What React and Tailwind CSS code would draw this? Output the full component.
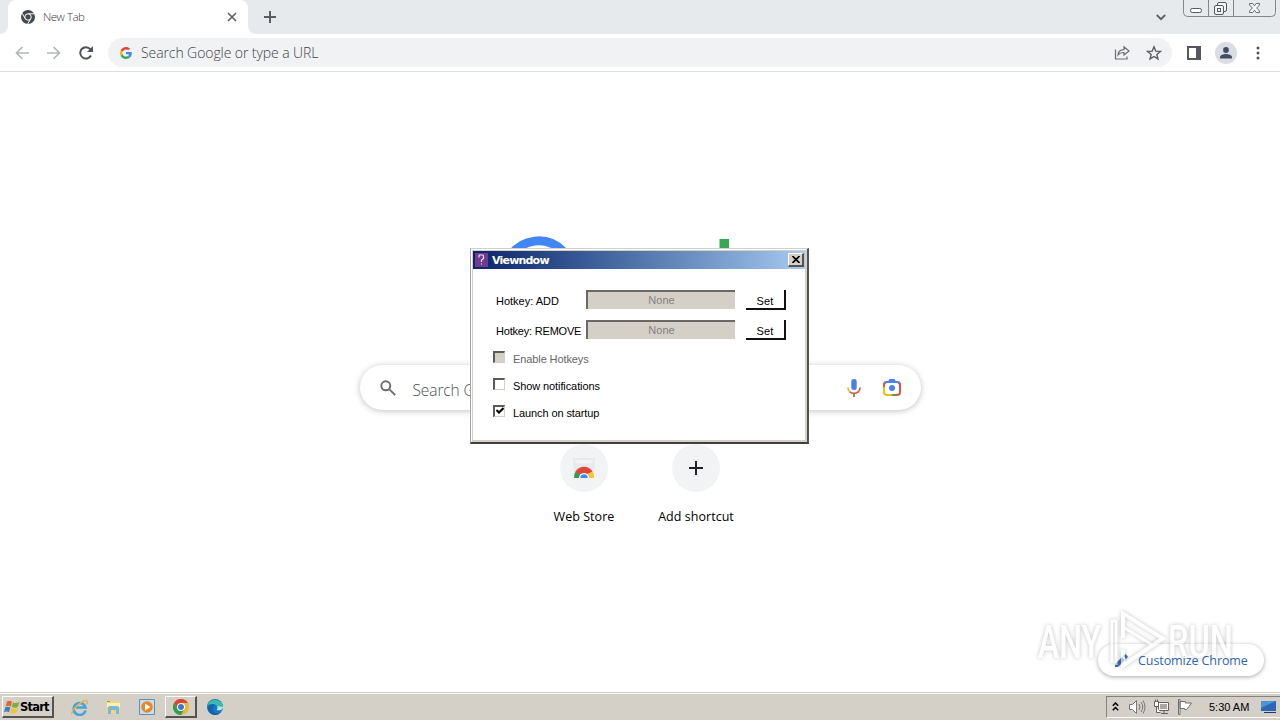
import React from "react";
import clsx from "clsx";

const TabStrip = () => (
  <div className="flex h-[34px] bg-[#e7eaed]">
    <div className="flex h-full w-2 items-end bg-white">
      <div className="h-full w-2 rounded-br-lg bg-[#e7eaed]" />
    </div>
    <div className="flex h-full w-60 items-center rounded-t-lg bg-white pl-[13px] pr-[11px]">
      <svg width="14" height="14" viewBox="0 0 14 14">
        <circle cx="7" cy="7" r="7" fill="#45484c" />
        <g stroke="#fff" strokeWidth="1" fill="none">
          <path d="M7 3.800h6.400M4.200 8.600 1 3.200M9.800 8.600 6.600 14" />
          <circle cx="7" cy="7" r="3.200" fill="#45484c" />
        </g>
      </svg>
      <span className="ml-2 flex-1 text-[11.5px] leading-4 font-light tracking-[-0.500px] text-[#3c4043]">New Tab</span>
      <svg width="10" height="10" viewBox="0 0 10 10" stroke="#5f6368" strokeWidth="1.700">
        <path d="M1 1l8 8M9 1l-8 8" />
      </svg>
    </div>
    <div className="flex w-2 items-end bg-white">
      <div className="h-full w-2 rounded-bl-lg bg-[#e7eaed]" />
    </div>
    <svg className="mt-[11px] ml-2" width="12" height="12" viewBox="0 0 12 12" stroke="#5a5e63" strokeWidth="2">
      <path d="M6 0v12M0 6h12" />
    </svg>
    <svg className="mt-[14px] ml-auto" width="10" height="7" viewBox="0 0 10 7" fill="none" stroke="#5f6368" strokeWidth="1.900">
      <path d="M.8 1 5 5.200 9.200 1" />
    </svg>
    <svg className="ml-[17px] shrink-0" width="97" height="18" viewBox="0 0 97 18" fill="none" stroke="#83878c">
      <path d="M.5 0v12.500q0 4 4 4h84q4 0 4-4V0M25.500 0v16M50.500 0v16" />
      <rect x="7.500" y="8.500" width="11" height="4" rx="1.800" fill="#fff" stroke="#55595e" />
      <g stroke="#55595e" fill="#f4f5f6">
        <rect x="34.500" y="2.500" width="9" height="9" rx="1.500" />
        <rect x="31.500" y="5.500" width="9" height="9" rx="1.500" />
        <rect x="34.500" y="8.500" width="3" height="3" />
      </g>
      <path d="M66.500 3.500h3.300l1.700 2.300 1.700-2.300h3.300v1.500L73.700 8l2.800 3v1.500h-3.300l-1.700-2.300-1.700 2.300h-3.300V11l2.800-3-2.800-3z" fill="#f4f5f6" stroke="#6a6e73" />
    </svg>
  </div>
);

const GoogleG = () => (
  <svg width="12" height="12" viewBox="0 0 48 48">
    <path fill="#EA4335" d="M24 9.500c3.540 0 6.710 1.220 9.210 3.600l6.850-6.850C35.900 2.380 30.470 0 24 0 14.620 0 6.510 5.380 2.560 13.220l7.980 6.190C12.430 13.720 17.740 9.500 24 9.500z" />
    <path fill="#4285F4" d="M46.980 24.550c0-1.570-.15-3.090-.38-4.550H24v9.020h12.940c-.58 2.960-2.260 5.480-4.780 7.180l7.730 6c4.510-4.180 7.090-10.360 7.090-17.650z" />
    <path fill="#FBBC05" d="M10.530 28.590c-.48-1.450-.76-2.990-.76-4.590s.27-3.140.76-4.590l-7.980-6.190C.92 16.460 0 20.120 0 24c0 3.880.92 7.540 2.560 10.780l7.970-6.190z" />
    <path fill="#34A853" d="M24 48c6.480 0 11.930-2.130 15.890-5.810l-7.730-6c-2.150 1.450-4.920 2.300-8.160 2.300-6.260 0-11.570-4.220-13.470-9.910l-7.980 6.190C6.510 42.620 14.620 48 24 48z" />
  </svg>
);

const Toolbar = () => (
  <div className="flex h-[38px] items-center border-b border-[#dcdde0] bg-white pl-[15px]">
    <svg width="14" height="14" viewBox="0 0 14 14" fill="none" stroke="#b4b7ba" strokeWidth="1.700">
      <path d="M14 7H1.500M7.500 1l-6 6 6 6" />
    </svg>
    <svg className="ml-[18px]" width="14" height="14" viewBox="0 0 14 14" fill="none" stroke="#b4b7ba" strokeWidth="1.700">
      <path d="M0 7h12.500M6.500 1l6 6-6 6" />
    </svg>
    <svg className="ml-[18px]" width="14" height="14" viewBox="0 0 14 14" fill="none">
      <path d="M12 9.500A5.700 5.700 0 1 1 11.300 3.200L13 5" stroke="#505458" strokeWidth="2" />
      <path d="M14 0v6H8z" fill="#505458" />
    </svg>
    <div className="ml-[15px] flex h-[29px] w-[1064px] items-center rounded-full bg-[#f0f2f4] pr-[10px] pl-3">
      <GoogleG />
      <span className="ml-[9px] flex-1 text-[14px] leading-5 font-light tracking-[-0.090px] text-[#3f4347]">
        Search Google or type a URL
      </span>
      <svg width="16" height="15" viewBox="0 0 16 15" fill="none" stroke="#6b6f74" strokeWidth="1.200">
        <path d="M1.500 4.500v9.500h11.500V11.500" />
        <path d="M4 10c.3-3.600 2.500-5.200 6-5.300V1.800L15 6l-5 4V7.500C7.500 7.500 5.500 8 4 10z" />
      </svg>
      <svg className="ml-4" width="16" height="16" viewBox="0 0 16 16" fill="none" stroke="#5a5e63" strokeWidth="1.400">
        <path d="M8 1.800l1.750 4.300 4.650.35-3.550 3 1.100 4.500L8 11.500l-3.950 2.450 1.100-4.500-3.550-3 4.650-.35z" />
      </svg>
    </div>
    <svg className="ml-[15px]" width="14" height="14" viewBox="0 0 14 14">
      <rect x="1" y="1" width="12" height="12" fill="#fff" stroke="#55585d" strokeWidth="2" />
      <path d="M9 1h4v12H9z" fill="#55585d" />
    </svg>
    <svg className="ml-[14px]" width="22" height="22" viewBox="0 0 22 22">
      <circle cx="11" cy="11" r="11" fill="#dadde1" />
      <circle cx="11" cy="8" r="2.900" fill="#414c68" />
      <path d="M5 16.500v-1.200c0-2.200 3.500-3.300 6-3.300s6 1.100 6 3.300v1.200z" fill="#414c68" />
    </svg>
    <svg className="ml-[19px]" width="4" height="14" viewBox="0 0 4 14" fill="#505458">
      <circle cx="2" cy="2" r="1.500" />
      <circle cx="2" cy="7" r="1.500" />
      <circle cx="2" cy="12" r="1.500" />
    </svg>
  </div>
);

const SearchBox = () => (
  <div className="mt-[41px] flex h-[45px] w-[561px] items-center rounded-full bg-white pr-5 pl-5 shadow-[0_1px_6px_rgba(32,33,36,0.28)]">
    <svg width="16" height="16" viewBox="0 0 16 16" fill="none" stroke="#6a6d71" strokeWidth="1.900">
      <circle cx="5.800" cy="5.800" r="4.500" />
      <path d="M9.200 9.200l6 6" />
    </svg>
    <span className="ml-[17px] flex-1 pt-1 text-[15.5px] leading-5 font-light tracking-[-0.1px] text-[#4c5054]">Search Google or type a URL</span>
    <svg width="14" height="18" viewBox="0 0 14 18" fill="none">
      <rect x="4.300" y="0" width="5.400" height="11" rx="2.500" fill="#4a80ee" />
      <path d="M1 8.500c0 2 .6 3.400 1.800 4.400" stroke="#f0b51c" strokeWidth="1.700" />
      <path d="M2.800 12.900C5 14.800 9 14.800 11.200 12.900 12.400 11.900 13 10.500 13 8.500" stroke="#df5144" strokeWidth="1.700" />
      <path d="M7 14v4" stroke="#5b9c50" strokeWidth="1.800" />
    </svg>
    <svg className="ml-[22px]" width="18" height="17" viewBox="0 0 18 17" fill="none" strokeWidth="2">
      <path d="M1 8V6q0-3 3-3h10q3 0 3 3v2" stroke="#4a80ee" />
      <path d="M5 2.500L6.500 0h5L13 2.500z" fill="#4a80ee" />
      <path d="M15.500 3.300Q17 4 17 6v4" stroke="#df5144" />
      <path d="M1 8V6q0-2 1.200-2.700" stroke="#df5144" />
      <path d="M1 8v5q0 3 3 3h5" stroke="#f2b824" />
      <path d="M9 16h4" stroke="#4fa45a" />
      <path d="M12.500 16H14q3 0 3-3v-3" stroke="#d9583c" />
      <circle cx="9" cy="9" r="3" fill="#4a80ee" />
    </svg>
  </div>
);

const Shortcut = ({ label, children }) => (
  <div className="flex w-28 flex-col items-center">
    <div className="flex size-12 items-center justify-center rounded-full bg-[#f1f3f4]">{children}</div>
    <span className="mt-[15px] text-[12.500px] leading-5 tracking-[0.040px] text-black">{label}</span>
  </div>
);

const NewTabPage = () => (
  <div className="relative flex h-[620px] flex-col items-center bg-white pt-[162px]">
    {/* Logo */}
    <svg width="272" height="90" viewBox="504 234 272 90" fill="none">
      <path d="M562.500 251A33.500 33.500 0 1 0 572 275" stroke="#4285f4" strokeWidth="9" />
      <path d="M719.500 239h9.500v60h-9.500z" fill="#34a853" />
    </svg>
    <SearchBox />
    <div className="mt-[34px] flex">
      <Shortcut label="Web Store">
        <svg width="24" height="24" viewBox="0 0 24 24">
          <path d="M1 2h22l-1 17H2z" fill="#e8e9ea" />
          <path d="M3 4h18v1.500q-2 2-4 2H7q-2 0-4-2z" fill="#f4f4f5" />
          <path d="M2 22a10 10 0 0 1 2-7l5 4v3z" fill="#349b53" />
          <path d="M3.500 15.500a10 10 0 0 1 17 0L17 18H7z" fill="#df4638" />
          <path d="M20.500 15.500A10 10 0 0 1 22 22h-7v-4z" fill="#f7c633" />
          <path d="M7 22a5 5 0 0 1 10 0z" fill="#fff" />
          <path d="M8.300 22a3.700 3.700 0 0 1 7.400 0z" fill="#4285f4" />
        </svg>
      </Shortcut>
      <Shortcut label="Add shortcut">
        <svg width="14" height="14" viewBox="0 0 14 14" stroke="#202124" strokeWidth="2">
          <path d="M7 0v14M0 7h14" />
        </svg>
      </Shortcut>
    </div>
    <div className="absolute right-4 bottom-4 flex h-8 w-[166px] items-center rounded-full bg-white pl-[17px] shadow-[0_1px_4px_rgba(0,0,0,0.35)]">
      <svg width="13" height="13" viewBox="0 0 13 13">
        <path d="M0 13v-3l7-7 3 3-7 7zM8 2l1.500-1.500Q10.200 0 11 .500L12.500 2q.5.700 0 1.500L11 5z" fill="#3f6fb9" />
      </svg>
      <span className="ml-[10px] pt-0.5 text-[12.500px] leading-5 tracking-[-0.080px] text-[#2d65ba]">Customize Chrome</span>
    </div>
  </div>
);

const Watermark = () => (
  <svg
    className="absolute top-[604px] left-[1030px] drop-shadow-[0_0_2px_rgba(0,0,0,0.4)]"
    width="220"
    height="84"
    viewBox="0 0 220 84"
    fill="#fff"
    opacity="0.6"
  >
    <text x="8" y="54" fontFamily="Roboto" fontSize="47" fontWeight="500" textLength="63" lengthAdjust="spacingAndGlyphs">ANY</text>
    <text x="138" y="54" fontFamily="Roboto" fontSize="47" fontWeight="500" textLength="65" lengthAdjust="spacingAndGlyphs">RUN</text>
    <g fill="none" stroke="#fff" strokeWidth="4">
      <path d="M93 34V9.500l40 25-40 27V46" />
      <path d="M82 59V17h4v44M93 23l31 19" strokeWidth="3" />
    </g>
  </svg>
);

const HotkeyRow = ({ label, spacing }) => (
  <div className="flex h-5 items-center">
    <span className={clsx("w-[90px] pt-0.5 text-[11px] leading-4 whitespace-nowrap", spacing)}>{label}</span>
    <div className="mb-px h-[19px] w-[149px] border-t-2 border-l-2 border-t-[#6b6965] border-l-[#6b6965] bg-[#d4d0c8] text-center text-[11px] leading-[17px] tracking-[0.100px] text-[#85827e]">
      None
    </div>
    <button className="ml-[11px] h-5 w-10 border-r-2 border-b-2 border-[#111] bg-white pt-[3px] text-center text-[11px] leading-4 tracking-[0.100px]">
      Set
    </button>
  </div>
);

const Check = ({ label, checked, disabled }) => (
  <label className="flex h-[27px] items-center">
    <span
      className={clsx(
        "flex size-3 items-center justify-center border-t-2 border-l-2 border-r border-b border-t-[#5d5b58] border-l-[#5d5b58] border-r-[#d4d0c8] border-b-[#d4d0c8]",
        disabled ? "bg-[#d4d0c8]" : "bg-white"
      )}
    >
      {checked && (
        <svg width="8" height="8" viewBox="0 0 8 8" fill="none" stroke="#000" strokeWidth="2">
          <path d="M.5 3l2.500 2.500L7.500 1" />
        </svg>
      )}
    </span>
    <span className={clsx("ml-2 pt-1 text-[11px] leading-4 tracking-[-0.1px]", disabled ? "text-[#666]" : "text-black")}>{label}</span>
  </label>
);

const ViewndowDialog = () => (
  <div className="absolute top-[248px] left-[470px] h-[196px] w-[339px] border border-t-[#d4d0c8] border-r-2 border-b-2 border-l-[#aaa7a2] border-r-[#55534f] border-b-[#404040] bg-white font-['Liberation_Sans',sans-serif] text-black">
    <div className="h-full border-l border-r border-l-white border-r-[#d4d0c8] border-t border-b border-t-white border-b-[#d4d0c8]">
      <div className="h-full border border-[#d4d0c8]">
        <div className="flex h-[18px] items-center bg-linear-to-r from-[#0a246a] to-[#a6caf0] pr-px pl-0.5">
          <svg width="13" height="14" viewBox="0 0 13 14">
            <path d="M0 0h13v14H0z" fill="#713b91" />
            <path d="M4 4.500V3q0-1 1-1h2.500q1 0 1 1v2.500L6.500 7v2" fill="none" stroke="#eadcf0" strokeWidth="1.200" />
            <path d="M6 10h1v2H6z" fill="#bb9bc9" />
          </svg>
          <span className="ml-1 flex-1 pt-px font-['DejaVu_Sans',sans-serif] text-[11px] leading-4 font-bold tracking-[-0.800px] text-white">
            Viewndow
          </span>
          <button className="flex h-[14px] w-4 items-center justify-center border-t border-r-2 border-b-2 border-l border-t-white border-r-[#55534f] border-b-[#55534f] border-l-white bg-[#d4d0c8]">
            <svg width="8" height="7" viewBox="0 0 8 7" stroke="#000" strokeWidth="1.600">
              <path d="M.5 0l7 7M7.500 0l-7 7" />
            </svg>
          </button>
        </div>
        <div className="flex flex-col pt-[21px] pl-[23px]">
          <HotkeyRow label="Hotkey: ADD" spacing="tracking-[0px]" />
          <div className="h-[10px]" />
          <HotkeyRow label="Hotkey: REMOVE" spacing="tracking-[-0.2px]" />
          <div className="mt-[3px] -ml-[3px]">
            <Check label="Enable Hotkeys" disabled />
            <Check label="Show notifications" />
            <Check label="Launch on startup" checked />
          </div>
        </div>
      </div>
    </div>
  </div>
);

const ChromeLogo = () => (
  <svg width="16" height="16" viewBox="0 0 16 16">
    <circle cx="8" cy="8" r="8" fill="#e9b934" />
    <path d="M8 4h7A8 8 0 0 0 1 4l3.500 6z" fill="#db4437" />
    <path d="M1 4a8 8 0 0 0 7 12l3.500-6H4.500z" fill="#2f9e55" />
    <circle cx="8" cy="8" r="4" fill="#fff" />
    <circle cx="8" cy="8" r="3" fill="#4277cf" />
  </svg>
);

const Taskbar = () => (
  <div className="flex h-7 items-start border-t border-[#d4d0c8] bg-[#d4d0c8] font-['Liberation_Sans',sans-serif]">
    <div className="flex h-full w-full items-center border-t border-white">
      <button className="ml-0.5 flex h-[22px] w-[52px] items-center border-t border-r-2 border-b-2 border-l border-t-white border-r-[#55534f] border-b-[#55534f] border-l-white pl-px">
        <svg width="16" height="16" viewBox="0 0 16 16">
          <path d="M3 2.500Q6 1 8 2.800L6.700 7.500Q4.500 6 1.600 7.200z" fill="#df682e" />
          <path d="M9 3.200Q11.500 5 15.500 3L14 7.800Q11 9.500 7.700 7.800z" fill="#7aaf3f" />
          <path d="M1.300 8.200Q4 7 6.400 8.500L5 13.300Q3 11.800 0 13z" fill="#3c7fc6" />
          <path d="M7.400 8.900Q10.500 10.500 13.700 9L12.300 13.600Q9 15.500 6 13.700z" fill="#f3c333" />
        </svg>
        <span className="font-['DejaVu_Sans',sans-serif] text-[11.500px] leading-4 font-bold tracking-[-0.800px] text-black">Start</span>
      </button>
      {/* Quick launch */}
      <svg className="ml-[17px]" width="17" height="17" viewBox="0 0 17 17" fill="none">
        <path d="M14.500 11.500A6 6 0 1 1 14.500 8.500H5" stroke="#45a2dc" strokeWidth="2.600" />
        <path d="M1 15C0 12 8 3 15 1.500q2 .5.500 4" stroke="#e1b645" strokeWidth="1.500" />
      </svg>
      <svg className="ml-[17px]" width="17" height="16" viewBox="0 0 17 16">
        <path d="M1 3l1-2h4l1 1h8v12H1z" fill="#edd686" />
        <path d="M2 4h13v4H2z" fill="#fbf1b8" />
        <path d="M3 15V9q0-2 2-2h7q2 0 2 2v6h-3v-4H6v4z" fill="#7bb7d7" />
        <path d="M2 2h3v1H2z" fill="#65ad62" />
      </svg>
      <svg className="ml-[17px]" width="16" height="16" viewBox="0 0 16 16">
        <path d="M.5.500h15v15H.5z" fill="#c6dff0" stroke="#5a91bd" />
        <circle cx="8" cy="8" r="5.800" fill="#ed8622" />
        <path d="M6 4.500v7L11.500 8z" fill="#fff" />
      </svg>
      <div className="ml-[10px] flex h-[22px] w-8 items-center justify-center border-t border-r-2 border-b-2 border-l border-t-white border-r-[#55534f] border-b-[#55534f] border-l-white">
        <ChromeLogo />
      </div>
      <svg className="ml-[10px]" width="16" height="16" viewBox="0 0 16 16">
        <circle cx="8" cy="8" r="8" fill="#1978c4" />
        <path d="M.5 6.500a8 8 0 0 1 15.500 1.500q-.5 4-6 3 2-3-1-5-4-2-8.500.5z" fill="#39bca9" />
        <path d="M8 6q-4 3-1 7 3 2.500 6.500 1A8 8 0 0 1 2 13q-3-5 1-7 3-1.500 5 0z" fill="#1462ae" />
        <path d="M9.500 11q2-2 .5-4 3 1 6 .8-.2 4.500-6.500 3.200z" fill="#fff" opacity=".65" />
      </svg>
      {/* Notification area */}
      <div className="ml-auto flex h-[22px] w-[174px] items-center border-t border-b border-l border-t-[#85827d] border-b-white border-l-[#85827d] pl-[5px]">
        <svg className="mb-0.5" width="7" height="9" viewBox="0 0 7 9" fill="none" stroke="#000" strokeWidth="1.500">
          <path d="M.8 3.700 3.500 1l2.700 2.700M.8 8.200l2.700-2.700 2.700 2.700" />
        </svg>
        <svg className="ml-[10px]" width="17" height="16" viewBox="0 0 17 16" fill="none" stroke="#777">
          <path d="M.5 5.500h3l4-4v13l-4-4h-3z" fill="#fff" />
          <path d="M10 5q2 3 0 6M12 3q3.500 5 0 10M14 1.500q4 6.500 0 13" />
        </svg>
        <svg className="ml-[7px]" width="17" height="16" viewBox="0 0 17 16" fill="none" stroke="#65625f">
          <path d="M5.500 3.500h10v8h-10zM8 14.500h7M11 12v2" fill="#f7f7f5" />
          <path d="M7 5h7v5H7z" fill="#aaa7a2" stroke="none" />
          <path d="M1.500 2.500h4v5h-4zM2.500.500v2M4.500.500v2M3.500 8v5.500h4" fill="#fff" />
        </svg>
        <svg className="ml-[7px]" width="16" height="16" viewBox="0 0 16 16" fill="#fff" stroke="#716e6a">
          <path d="M1.500.500h1.500v15H1.500zM3 2.500h5.500v1.500h6L12 7.500l-2.500 3h-2V9.500H3z" />
        </svg>
        <span className="ml-4 flex-1 text-[11px] leading-4 whitespace-nowrap text-black">5:30 AM</span>
        <svg className="mr-0.5" width="18" height="14" viewBox="0 0 18 14">
          <path d="M1 1h15v10H1z" fill="#2c66b4" />
          <path d="M1 1h15L1 8z" fill="#5093d3" />
          <path d="M4 12h12v1H4z" fill="#1d3864" />
        </svg>
      </div>
    </div>
  </div>
);

const App = () => {
  return (
    <div className="relative h-[720px] w-[1280px] overflow-hidden bg-white font-['Open_Sans','Noto_Sans',sans-serif]">
      <TabStrip />
      <Toolbar />
      <NewTabPage />
      <Taskbar />
      <Watermark />
      <ViewndowDialog />
    </div>
  );
};

export default App;
